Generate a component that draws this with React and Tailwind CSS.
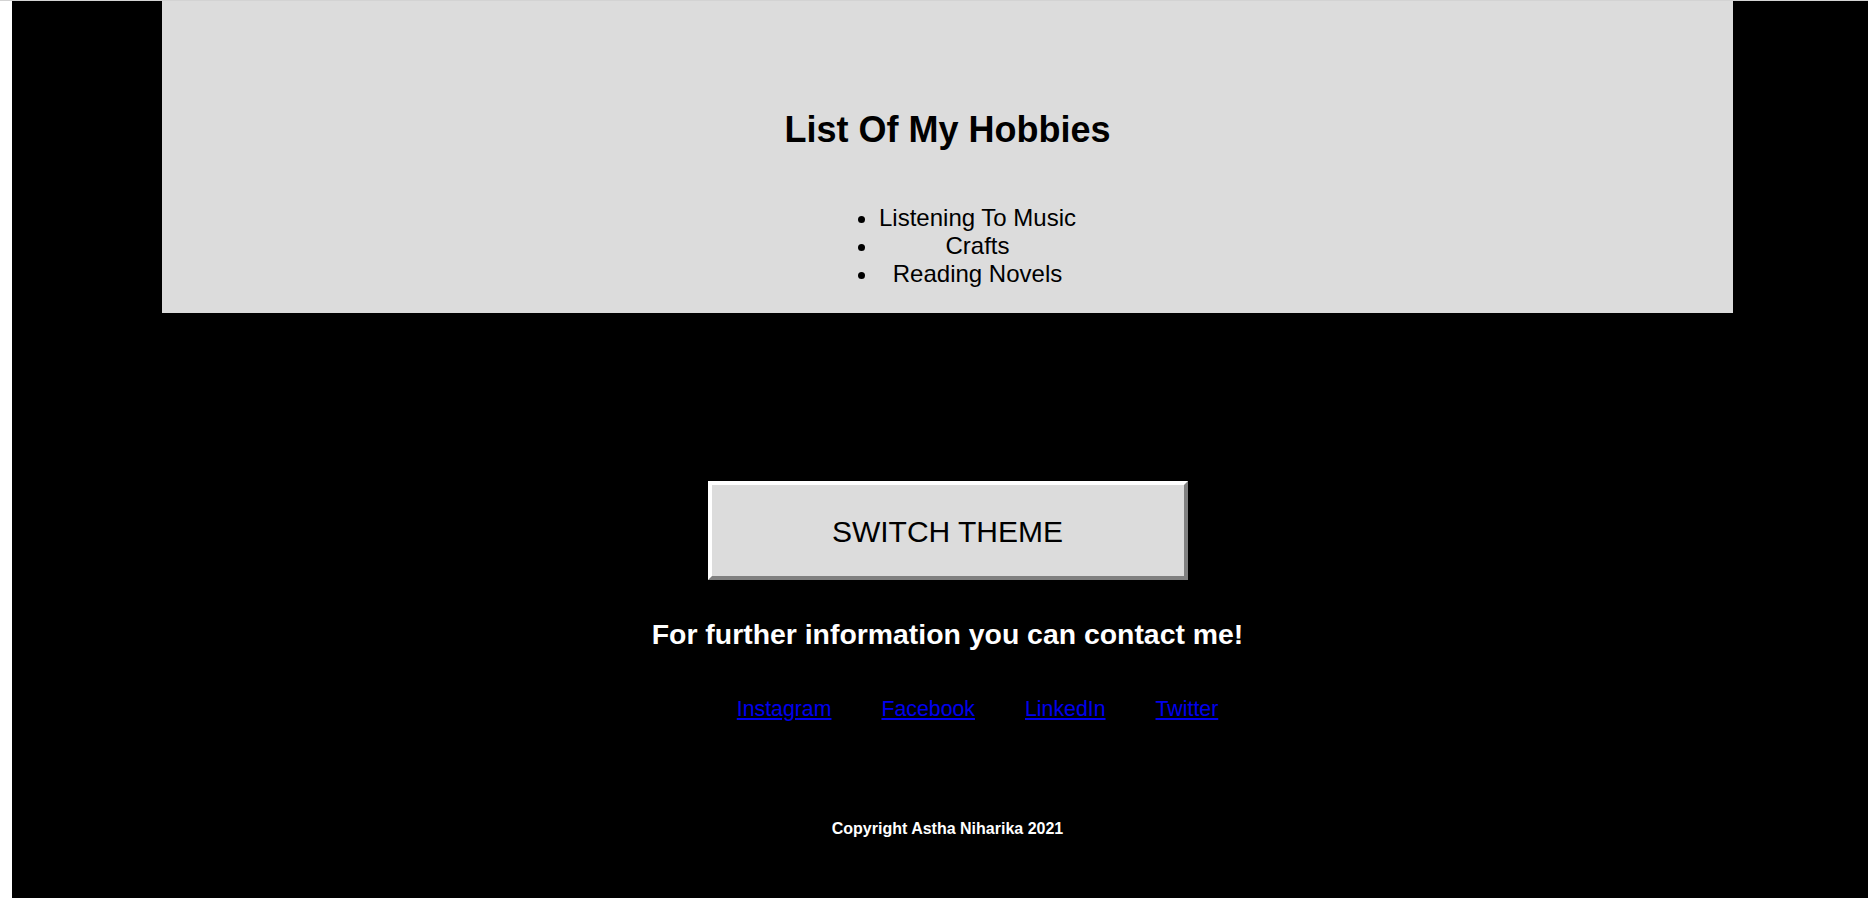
import React from "react";

const hobbies = ["Listening To Music", "Crafts", "Reading Novels"];
const links = ["Instagram", "Facebook", "LinkedIn", "Twitter"];

export default function App() {
  return (
    <div
      className="h-[898px] flex bg-white border-t border-[#d3d3d3] overflow-hidden"
      style={{ fontFamily: '"Liberation Sans", Arial, sans-serif' }}
    >
      <div className="w-[12px] shrink-0" />
      <div className="flex-1 bg-black">
        <div className="ml-[150px] w-[1571px]">
          {/* Hobbies panel */}
          <section className="bg-[#dcdcdc] h-[312px] pt-[108px] text-black">
            <h1 className="text-center text-[36px] font-bold leading-[1.15]">
              List Of My Hobbies
            </h1>
            <div className="flex justify-center mt-[54px]">
              <ul className="list-disc pl-[40px] ml-[20px] text-[24px] leading-[28px] text-center">
                {hobbies.map((h) => (
                  <li key={h}>{h}</li>
                ))}
              </ul>
            </div>
          </section>

          {/* Theme button */}
          <div className="flex justify-center mt-[168px]">
            <button className="w-[480px] h-[99px] bg-[#dcdcdc] text-black text-[30px] pt-[2px] border-[4px] border-t-white border-l-white border-r-[#808080] border-b-[#808080]">
              SWITCH THEME
            </button>
          </div>

          {/* Contact */}
          <h2 className="mt-[38px] text-center text-white text-[28.4px] font-bold leading-[1.15]">
            For further information you can contact me!
          </h2>
          <div className="flex justify-center gap-[50px] pl-[60px] mt-[46px] text-[21.3px] leading-[1.15]">
            {links.map((l) => (
              <a key={l} href="#" className="text-[#0000ee] underline">
                {l}
              </a>
            ))}
          </div>

          <footer className="mt-[99px] text-center text-white text-[16px] font-bold leading-[1.15]">
            Copyright Astha Niharika 2021
          </footer>
        </div>
      </div>
    </div>
  );
}
